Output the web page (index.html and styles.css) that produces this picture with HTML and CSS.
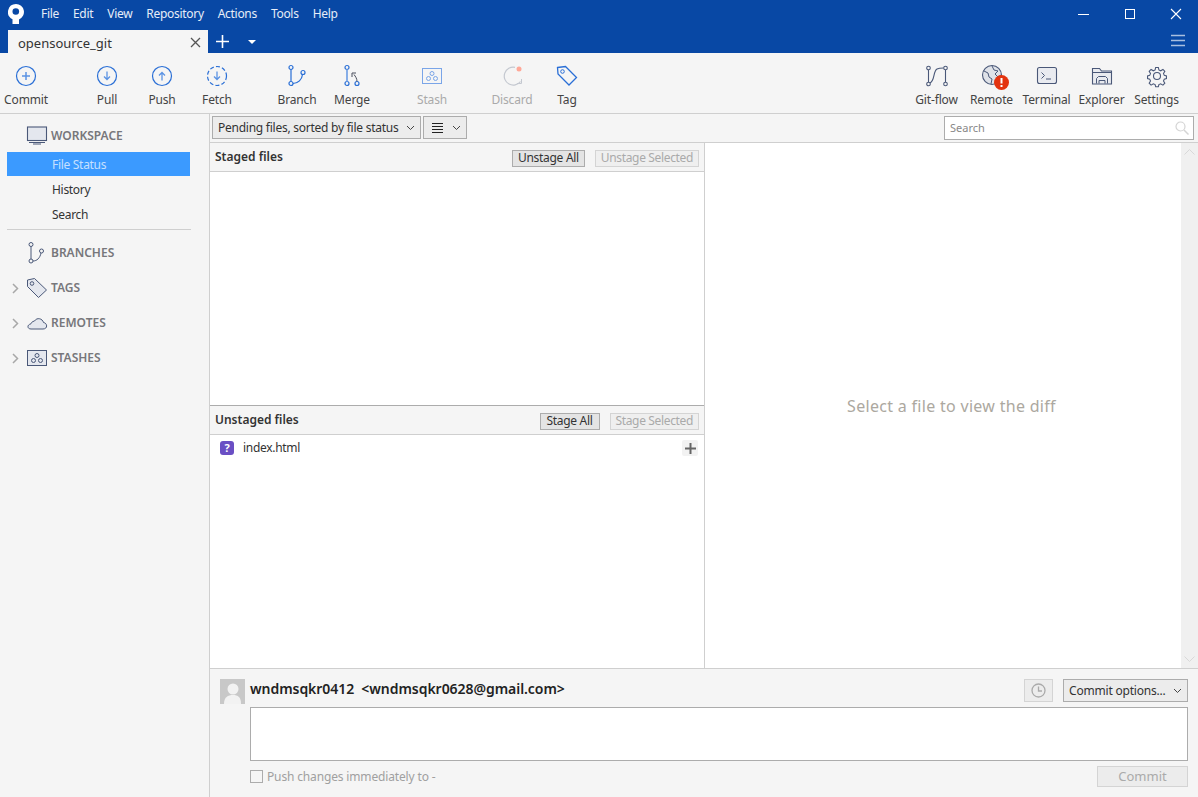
FILE: index.html
```html
<!DOCTYPE html>
<html lang="en">
<head>
  <meta charset="UTF-8">
  <title>opensource_git</title>
  <link rel="stylesheet" href="styles.css">
</head>
<body>
  <header class="titlebar">
    <div class="menu-row">
      <svg class="logo" width="16" height="24" viewBox="0 0 16 24"><path d="M8 2a8 8 0 0 0-3.500 15.200V22H11v-4.600A8 8 0 0 0 8 2z" fill="#fff"/><circle cx="7.800" cy="9.500" r="3.300" fill="#0848a5"/></svg>
      <nav class="menu">
        <span>File</span><span>Edit</span><span>View</span><span>Repository</span><span>Actions</span><span>Tools</span><span>Help</span>
      </nav>
      <div class="win-buttons">
        <svg width="12" height="12" viewBox="0 0 12 12"><path d="M0 6.500h11" stroke="#fff" stroke-width="1"/></svg>
        <svg width="12" height="12" viewBox="0 0 12 12"><rect x="1.500" y="1.500" width="9" height="9" fill="none" stroke="#fff"/></svg>
        <svg width="12" height="12" viewBox="0 0 12 12"><path d="M1 1l10 10M11 1L1 11" stroke="#fff" stroke-width="1.100"/></svg>
      </div>
    </div>
    <div class="tab-row">
      <div class="tab">
        <span>opensource_git</span>
        <svg width="11" height="11" viewBox="0 0 11 11"><path d="M1 1l9 9M10 1l-9 9" stroke="#555" stroke-width="1.300"/></svg>
      </div>
      <svg class="tab-plus" width="15" height="15" viewBox="0 0 15 15"><path d="M7.500 1v13M1 7.500h13" stroke="#fff" stroke-width="1.600"/></svg>
      <span class="tab-caret"></span>
      <svg class="hamburger" width="14" height="13" viewBox="0 0 14 13"><path d="M0 1.500h14M0 6.500h14M0 11.500h14" stroke="#a9bfe0" stroke-width="1.600"/></svg>
    </div>
  </header>

  <section class="toolbar">
    <div class="tool commit">
      <svg width="22" height="22" viewBox="0 0 22 22"><circle cx="11" cy="11" r="9.500" fill="none" stroke="#2a6fd6" stroke-width="1.200"/><path d="M11 7v8M7 11h8" stroke="#5b93e3" stroke-width="1.500"/></svg>
      <span>Commit</span>
    </div>
    <div class="tool">
      <svg width="22" height="22" viewBox="0 0 22 22"><circle cx="11" cy="11" r="9.500" fill="none" stroke="#2a6fd6" stroke-width="1.200"/><path d="M11 6.500v8M8 11.500l3 3 3-3" fill="none" stroke="#5b93e3" stroke-width="1.300"/></svg>
      <span>Pull</span>
    </div>
    <div class="tool">
      <svg width="22" height="22" viewBox="0 0 22 22"><circle cx="11" cy="11" r="9.500" fill="none" stroke="#2a6fd6" stroke-width="1.200"/><path d="M11 15.500v-8M8 10.500l3-3 3 3" fill="none" stroke="#5b93e3" stroke-width="1.300"/></svg>
      <span>Push</span>
    </div>
    <div class="tool group-end">
      <svg width="22" height="22" viewBox="0 0 22 22"><circle cx="11" cy="11" r="9.500" fill="none" stroke="#2a6fd6" stroke-width="1.200" stroke-dasharray="4 2.200"/><path d="M11 6.500v8M8 11.500l3 3 3-3" fill="none" stroke="#5b93e3" stroke-width="1.300"/></svg>
      <span>Fetch</span>
    </div>
    <div class="tool">
      <svg width="22" height="24" viewBox="0 0 22 24"><g fill="none" stroke="#2a6fd6" stroke-width="1.200"><circle cx="5" cy="3.500" r="2"/><circle cx="5" cy="19.500" r="2"/><circle cx="17" cy="8.500" r="2"/></g><path d="M5 5.500v12M7 19.500c5 0 9-4 9.500-9" fill="none" stroke="#2a6fd6" stroke-width="1.200"/></svg>
      <span>Branch</span>
    </div>
    <div class="tool group-end">
      <svg width="22" height="24" viewBox="0 0 22 24"><g fill="none" stroke="#2a6fd6" stroke-width="1.200"><circle cx="6" cy="3.500" r="2"/><circle cx="6" cy="19.500" r="2"/><circle cx="16" cy="19.500" r="2"/></g><path d="M6 5.500v12" stroke="#7ba6e6" stroke-width="1.800"/><path d="M16 17.500c0-3-1.500-5-3-7M11 13v-4h4" fill="none" stroke="#4a4f5c" stroke-width="1"/></svg>
      <span>Merge</span>
    </div>
    <div class="tool disabled group-end">
      <svg width="22" height="22" viewBox="0 0 22 22"><rect x="1.500" y="3.500" width="19" height="15" fill="none" stroke="#7aa5e8" stroke-width="1"/><g fill="none" stroke="#7aa5e8"><circle cx="11" cy="8.500" r="2"/><circle cx="7.500" cy="13.500" r="2"/><circle cx="14.500" cy="13.500" r="2"/></g></svg>
      <span>Stash</span>
    </div>
    <div class="tool disabled">
      <svg width="22" height="22" viewBox="0 0 22 22"><path d="M14 2.300A9 9 0 1 0 19.500 16.500" fill="none" stroke="#c4c8d0" stroke-width="1.200"/><path d="M20.500 14v4.500H16" fill="none" stroke="#c4c8d0"/><circle cx="18" cy="4" r="2.500" fill="#ffa898"/></svg>
      <span>Discard</span>
    </div>
    <div class="tool">
      <svg width="22" height="22" viewBox="0 0 22 22"><path d="M1.500 2.500l8-1 11 11-7.500 7.500-11-11z" fill="none" stroke="#2a6fd6" stroke-width="1.300"/><circle cx="6.500" cy="6.500" r="1.800" fill="none" stroke="#2a6fd6"/></svg>
      <span>Tag</span>
    </div>
    <div class="toolbar-right">
      <div class="tool">
        <svg width="22" height="22" viewBox="0 0 22 22"><g fill="none" stroke="#4a5878" stroke-width="1.100"><circle cx="2.500" cy="3" r="1.800"/><circle cx="2.500" cy="19" r="1.800"/><circle cx="19.500" cy="3" r="1.800"/><circle cx="19.500" cy="19" r="1.800"/><path d="M2.500 5v12M19.500 5v12M4 18c5-2 3-12 7-14 2-1 4-1 6.500-1"/></g></svg>
        <span>Git-flow</span>
      </div>
      <div class="tool remote">
        <svg width="34" height="26" viewBox="0 0 34 26"><circle cx="17" cy="11" r="9.500" fill="#dfe2e8" stroke="#4a5878" stroke-width="1.100"/><path d="M9 7l4 2 1 4 3 2-1 5M17 2l2 4 4 1-3 3 3 3 3-2" fill="none" stroke="#4a5878"/><circle cx="26.500" cy="18.500" r="7.500" fill="#e3330f"/><path d="M26.500 14v5.500M26.500 21v2" stroke="#fff" stroke-width="2"/></svg>
        <span>Remote</span>
      </div>
      <div class="tool">
        <svg width="22" height="22" viewBox="0 0 22 22"><rect x="1.500" y="2.500" width="19" height="16" rx="2" fill="#e9ebf0" stroke="#4a5878" stroke-width="1.100"/><path d="M5.500 7.500l3 3-3 3M10 14h5" fill="none" stroke="#4a5878"/></svg>
        <span>Terminal</span>
      </div>
      <div class="tool">
        <svg width="22" height="22" viewBox="0 0 22 22"><path d="M1.500 3.500h7l2 2.500h10v13h-19z" fill="#e9ebf0" stroke="#4a5878" stroke-width="1.100"/><path d="M1.500 7.500h19" stroke="#4a5878"/><path d="M5.500 18.500v-5l2-2h7l2 2v5M8 18.500v-3h6v3" fill="none" stroke="#4a5878"/></svg>
        <span>Explorer</span>
      </div>
      <div class="tool">
        <svg width="22" height="22" viewBox="0 0 22 22"><circle cx="11" cy="11" r="3.500" fill="none" stroke="#4a5878" stroke-width="1.100"/><path d="M9.500 1.500h3l.6 2.800 2 .9 2.500-1.500 2.100 2.100-1.500 2.500.9 2 2.400.6v3l-2.400.6-.9 2 1.500 2.500-2.100 2.100-2.500-1.500-2 .9-.6 2.400h-3l-.6-2.400-2-.9-2.500 1.500-2.100-2.100 1.500-2.500-.9-2-2.400-.6v-3l2.400-.6.9-2-1.500-2.500 2.100-2.100 2.500 1.500 2-.9z" transform="translate(1.100 1.100) scale(.9)" fill="none" stroke="#4a5878" stroke-width="1.200"/></svg>
        <span>Settings</span>
      </div>
    </div>
  </section>

  <div class="app">
    <aside class="sidebar">
      <div class="side-head workspace">
        <svg width="22" height="19" viewBox="0 0 22 19"><rect x="1.500" y="1" width="19" height="13.500" fill="#e4e7ee" stroke="#4a5878" stroke-width="1.100"/><path d="M3 16.500h16M7 18h8" stroke="#4a5878"/></svg>
        <span>WORKSPACE</span>
      </div>
      <div class="side-item active">File Status</div>
      <div class="side-item">History</div>
      <div class="side-item">Search</div>
      <hr class="side-sep">
      <div class="side-head branches">
        <svg width="20" height="22" viewBox="0 0 20 22"><g fill="none" stroke="#4a5878"><circle cx="4" cy="2.500" r="2"/><circle cx="4" cy="19" r="2"/><circle cx="14.500" cy="9" r="2"/><path d="M4 4.500v12.500M6 19c4 0 7-3 8-8"/></g></svg>
        <span>BRANCHES</span>
      </div>
      <div class="side-head">
        <svg class="chev" width="7" height="11" viewBox="0 0 7 11"><path d="M1 1l4.500 4.500L1 10" fill="none" stroke="#a8a8a8" stroke-width="1.500"/></svg>
        <svg width="22" height="22" viewBox="0 0 22 22"><path d="M1.500 3l7-1.500L20.500 13l-8 7.500-11-11z" fill="#e4e7ee" stroke="#4a5878"/><circle cx="6" cy="6.500" r="1.800" fill="none" stroke="#4a5878"/></svg>
        <span>TAGS</span>
      </div>
      <div class="side-head">
        <svg class="chev" width="7" height="11" viewBox="0 0 7 11"><path d="M1 1l4.500 4.500L1 10" fill="none" stroke="#a8a8a8" stroke-width="1.500"/></svg>
        <svg width="22" height="22" viewBox="0 0 22 22"><path d="M5 17h12c5 0 4.500-6 .5-6.500C16.500 6.500 11 5 8.500 9 6 9.500 5 11 4.800 12 1 12.500 1 17 5 17z" fill="#e4e7ee" stroke="#4a5878"/></svg>
        <span>REMOTES</span>
      </div>
      <div class="side-head">
        <svg class="chev" width="7" height="11" viewBox="0 0 7 11"><path d="M1 1l4.500 4.500L1 10" fill="none" stroke="#a8a8a8" stroke-width="1.500"/></svg>
        <svg width="22" height="22" viewBox="0 0 22 22"><rect x="1.500" y="3.500" width="19" height="15" fill="#e4e7ee" stroke="#4a5878"/><g fill="none" stroke="#4a5878"><circle cx="11" cy="8.500" r="2"/><circle cx="7.500" cy="13.500" r="2"/><circle cx="14.500" cy="13.500" r="2"/></g></svg>
        <span>STASHES</span>
      </div>
    </aside>

    <main class="content">
      <div class="filter-bar">
        <div class="combo pending"><span>Pending files, sorted by file status</span><svg class="caret" width="9" height="6" viewBox="0 0 9 6"><path d="M1 1l3.500 3.500L8 1" fill="none" stroke="#444"/></svg></div>
        <div class="combo view-mode">
          <svg width="11" height="10" viewBox="0 0 11 10"><path d="M0 .5h11M0 3.500h11M0 6.500h11M0 9.500h11" stroke="#222"/></svg>
          <svg class="caret" width="9" height="6" viewBox="0 0 9 6"><path d="M1 1l3.500 3.500L8 1" fill="none" stroke="#444"/></svg>
        </div>
        <div class="search">
          <span>Search</span>
          <svg width="14" height="14" viewBox="0 0 14 14"><circle cx="5.500" cy="5.500" r="4.500" fill="none" stroke="#d4d4d4" stroke-width="1.200"/><path d="M9 9l4.500 4.500" stroke="#d4d4d4" stroke-width="1.500"/></svg>
        </div>
      </div>

      <div class="panes">
        <div class="files">
          <div class="file-pane staged">
            <div class="pane-head">
              <b>Staged files</b>
              <button class="btn">Unstage All</button>
              <button class="btn off">Unstage Selected</button>
            </div>
            <div class="file-list"></div>
          </div>
          <div class="file-pane unstaged">
            <div class="pane-head">
              <b>Unstaged files</b>
              <button class="btn wide">Stage All</button>
              <button class="btn off">Stage Selected</button>
            </div>
            <div class="file-list">
              <div class="file-row">
                <span class="q-badge">?</span>
                <span class="file-name">index.html</span>
                <span class="add-btn"><svg width="11" height="11" viewBox="0 0 11 11"><path d="M5.500 0v11M0 5.500h11" stroke="#666" stroke-width="2"/></svg></span>
              </div>
            </div>
          </div>
        </div>
        <div class="diff">
          <div class="diff-msg">Select a file to view the diff</div>
          <div class="scrollbar">
            <svg width="11" height="6" viewBox="0 0 11 6"><path d="M.5 5.500l5-5 5 5" fill="none" stroke="#d8d8d8"/></svg>
            <svg width="11" height="6" viewBox="0 0 11 6"><path d="M.5.500l5 5 5-5" fill="none" stroke="#d8d8d8"/></svg>
          </div>
        </div>
      </div>

      <div class="commit-box">
        <div class="author-row">
          <svg class="avatar" width="25" height="25" viewBox="0 0 25 25"><rect width="25" height="25" fill="#c8c8c8"/><circle cx="13" cy="10" r="5.500" fill="#f2f2f2"/><path d="M4 25c0-7 4-9 9-9s8 2 8 9z" fill="#f2f2f2"/></svg>
          <span class="author">wndmsqkr0412 &nbsp;&lt;wndmsqkr0628@gmail.com&gt;</span>
          <span class="history-btn"><svg width="15" height="15" viewBox="0 0 15 15"><circle cx="7.500" cy="7.500" r="6.500" fill="none" stroke="#aaa" stroke-width="1.300"/><path d="M7.500 3.500v4.500h3.500" fill="none" stroke="#aaa" stroke-width="1.300"/></svg></span>
          <div class="combo options"><span>Commit options...</span><svg class="caret" width="9" height="6" viewBox="0 0 9 6"><path d="M1 1l3.500 3.500L8 1" fill="none" stroke="#444"/></svg></div>
        </div>
        <div class="commit-msg"></div>
        <div class="commit-foot">
          <span class="check"></span>
          <span class="push-label">Push changes immediately to -</span>
          <span class="commit-btn">Commit</span>
        </div>
      </div>
    </main>
  </div>
</body>
</html>
```

FILE: styles.css
```css
* {
  box-sizing: border-box;
}
html, body {
  height: 100%;
}
body {
  margin: 0;
  height: 797px;
  overflow: hidden;
  display: flex;
  flex-direction: column;
  font-family: "Noto Sans", "Open Sans", sans-serif;
  font-size: 12px;
  letter-spacing: -0.3px;
  color: #333;
  background-color: #f5f5f5;
}
svg {
  display: block;
  flex: none;
}

/* title bar */
.titlebar {
  height: 53px;
  flex: none;
  background-color: #0848a5;
  color: #fff;
}
.menu-row {
  height: 30px;
  display: flex;
  align-items: center;
  padding: 0 0 2px 8px;
}
.menu {
  display: flex;
  gap: 14px;
  margin-left: 17px;
  margin-bottom: 2px;
}
.menu span {
  color: #e6edf8;
}
.win-buttons {
  margin-left: auto;
  display: flex;
  gap: 34px;
  padding-right: 16px;
}
.tab-row {
  height: 23px;
  display: flex;
  align-items: center;
  padding-left: 8px;
}
.tab {
  width: 200px;
  height: 23px;
  display: flex;
  align-items: center;
  justify-content: space-between;
  padding: 2px 7px 0 10px;
  background-color: #f5f5f5;
  color: #333;
  font-size: 13px;
  letter-spacing: 0;
}
.tab-plus {
  margin-left: 7px;
}
.tab-caret {
  margin-left: 18px;
  border-left: 4px solid transparent;
  border-right: 4px solid transparent;
  border-top: 4px solid #fff;
}
.hamburger {
  margin-left: auto;
  margin-right: 13px;
  margin-bottom: 2px;
}

/* toolbar */
.toolbar {
  height: 61px;
  flex: none;
  display: flex;
  border-bottom: 1px solid #cfcfcf;
  background-color: #f5f5f5;
}
.tool {
  width: 55px;
  display: flex;
  flex-direction: column;
  align-items: center;
  padding-top: 11px;
  position: relative;
  color: #444;
  letter-spacing: -0.15px;
}
.tool svg {
  height: 24px;
}
.tool span {
  margin-top: 3px;
  line-height: 18px;
}
.tool.commit {
  width: 52px;
  margin-right: 27.5px;
}
.group-end {
  margin-right: 25px;
}
.disabled span {
  color: #aaa;
}
.toolbar-right {
  margin-left: auto;
  display: flex;
  padding-right: 14px;
}
.remote svg {
  height: 26px;
  margin-bottom: -2px;
}

/* main layout */
.app {
  flex: 1;
  display: flex;
  min-height: 0;
}
.sidebar {
  width: 210px;
  flex: none;
  padding: 9px 19px 0 7px;
  border-right: 1px solid #cfcfcf;
}
.side-head {
  height: 35px;
  display: flex;
  align-items: center;
  padding-left: 19px;
  position: relative;
  font-weight: 600;
  letter-spacing: 0;
  color: #77777b;
}
.side-head svg {
  margin-right: 3px;
}
.side-head .chev {
  position: absolute;
  left: 5px;
  top: 13px;
}
.workspace {
  height: 25px;
  margin-bottom: 4px;
}
.branches {
  padding-left: 20px;
}
.branches svg {
  margin-right: 4px;
}
.side-item {
  height: 25px;
  line-height: 25px;
  padding-left: 45px;
}
.side-item.active {
  height: 24px;
  line-height: 25px;
  background-color: #3b9aff;
  color: #c6e0ff;
  margin-bottom: 1px;
}
.side-sep {
  margin: 2px -1px 5px 0;
  border: 0;
  border-top: 1px solid #cfcfcf;
}
.content {
  flex: 1;
  min-width: 0;
  display: flex;
  flex-direction: column;
}

/* filter bar */
.filter-bar {
  height: 29px;
  flex: none;
  display: flex;
  align-items: flex-start;
  gap: 2px;
  padding: 2px 4px 0 2px;
  border-bottom: 1px solid #cfcfcf;
}
.combo {
  height: 23px;
  display: flex;
  align-items: center;
  justify-content: space-between;
  border: 1px solid #acacac;
  background-color: #ececec;
  color: #333;
}
.pending {
  width: 209px;
  padding: 0 5px;
  letter-spacing: -0.25px;
}
.view-mode {
  width: 44px;
  padding: 0 5px 0 8px;
}
.search {
  width: 250px;
  height: 24px;
  margin-left: auto;
  display: flex;
  align-items: center;
  justify-content: space-between;
  padding: 0 4px 1px 5px;
  border: 1px solid #acacac;
  background-color: #fff;
  color: #888;
  font-size: 11px;
  letter-spacing: 0;
}

/* file panes */
.panes {
  flex: 1;
  display: flex;
  min-height: 0;
}
.files {
  width: 495px;
  flex: none;
  display: flex;
  flex-direction: column;
  border-right: 1px solid #cfcfcf;
}
.file-pane {
  display: flex;
  flex-direction: column;
}
.staged {
  height: 263px;
  border-bottom: 1px solid #acacac;
}
.unstaged {
  flex: 1;
}
.pane-head {
  height: 29px;
  flex: none;
  display: flex;
  align-items: center;
  gap: 10px;
  padding: 0 5px;
  border-bottom: 1px solid #cfcfcf;
  background-color: #f5f5f5;
}
.pane-head b {
  margin-right: auto;
  margin-bottom: 2px;
  font-weight: 600;
  letter-spacing: 0;
  color: #333;
}
.btn {
  height: 17px;
  margin-top: 2px;
  padding: 0 5px;
  border: 1px solid #acacac;
  background-color: #e4e4e4;
  color: #333;
  font: inherit;
  letter-spacing: -0.3px;
  line-height: 14px;
}
.btn.wide {
  width: 60px;
}
.btn.off {
  border-color: #d4d4d4;
  background-color: #efefef;
  letter-spacing: -0.35px;
  color: #aaa;
}
.file-list {
  flex: 1;
  background-color: #fff;
}
.file-row {
  height: 26px;
  display: flex;
  align-items: center;
  padding: 0 6px 0 10px;
}
.q-badge {
  width: 14px;
  height: 14px;
  border-radius: 3px;
  background-color: #6a4fc4;
  color: #fff;
  font-size: 11px;
  font-weight: 700;
  line-height: 14px;
  text-align: center;
}
.file-name {
  margin-left: 9px;
  margin-bottom: 2px;
}
.add-btn {
  width: 16px;
  height: 16px;
  margin-left: auto;
  display: flex;
  align-items: center;
  justify-content: center;
  border-radius: 2px;
  background-color: #f2f2f2;
}

/* diff */
.diff {
  flex: 1;
  display: flex;
  position: relative;
  background-color: #fff;
}
.diff-msg {
  flex: 1;
  display: flex;
  align-items: center;
  justify-content: center;
  font-size: 16px;
  letter-spacing: 0.3px;
  color: #aca8a0;
}
.scrollbar {
  position: absolute;
  top: 0;
  right: 0;
  bottom: 0;
  width: 17px;
  display: flex;
  flex-direction: column;
  justify-content: space-between;
  align-items: center;
  padding: 6px 0;
  background-color: #f0f0f0;
}

/* commit box */
.commit-box {
  height: 129px;
  flex: none;
  padding: 10px 10px 0;
  border-top: 1px solid #cfcfcf;
}
.author-row {
  height: 25px;
  display: flex;
  align-items: flex-start;
}
.author {
  margin-left: 5px;
  font-size: 14px;
  line-height: 20px;
  font-weight: 600;
  letter-spacing: -0.05px;
  color: #222;
}
.history-btn {
  width: 29px;
  height: 23px;
  margin-left: auto;
  display: flex;
  align-items: center;
  justify-content: center;
  border: 1px solid #d4d4d4;
  background-color: #ececec;
}
.options {
  width: 125px;
  margin-left: 10px;
  padding: 0 5px;
  letter-spacing: -0.2px;
}
.commit-msg {
  height: 54px;
  margin: 3px 0 0 30px;
  border: 1px solid #acacac;
  background-color: #fff;
}
.commit-foot {
  margin: 5px 0 0 30px;
  height: 21px;
  display: flex;
  align-items: center;
}
.check {
  width: 13px;
  height: 13px;
  border: 1px solid #acacac;
  background-color: #f5f5f5;
}
.push-label {
  margin-left: 4px;
  letter-spacing: -0.15px;
  color: #a0a0a0;
}
.commit-btn {
  width: 91px;
  height: 21px;
  margin-left: auto;
  border: 1px solid #d4d4d4;
  background-color: #ececec;
  color: #aaa;
  font-size: 13px;
  letter-spacing: 0;
  line-height: 19px;
  text-align: center;
}
```
